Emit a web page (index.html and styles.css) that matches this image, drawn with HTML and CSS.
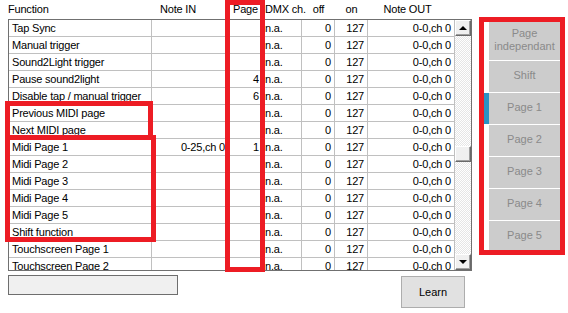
FILE: index.html
```html
<!DOCTYPE html>
<html lang="en">
<head>
  <meta charset="UTF-8" />
  <meta name="viewport" content="width=device-width, initial-scale=1.0" />
  <title>MIDI Mapping</title>
  <link rel="stylesheet" href="styles.css">
</head>
<body>
  <div class="window">
    <div class="mapping">
      <div class="grid-head">
        <span class="h-func">Function</span>
        <span class="h-notein">Note IN</span>
        <span class="h-page">Page</span>
        <span class="h-dmx">DMX ch.</span>
        <span class="h-off">off</span>
        <span class="h-on">on</span>
        <span class="h-noteout">Note OUT</span>
      </div>

      <div class="grid-box">
        <div class="grid-rows">
          <div class="row"><span class="fn">Tap Sync</span><span></span><span></span><span class="dmx">n.a.</span><span>0</span><span>127</span><span>0-0,ch 0</span></div>
          <div class="row"><span class="fn">Manual trigger</span><span></span><span></span><span class="dmx">n.a.</span><span>0</span><span>127</span><span>0-0,ch 0</span></div>
          <div class="row"><span class="fn">Sound2Light trigger</span><span></span><span></span><span class="dmx">n.a.</span><span>0</span><span>127</span><span>0-0,ch 0</span></div>
          <div class="row"><span class="fn">Pause sound2light</span><span></span><span>4</span><span class="dmx">n.a.</span><span>0</span><span>127</span><span>0-0,ch 0</span></div>
          <div class="row"><span class="fn">Disable tap / manual trigger</span><span></span><span>6</span><span class="dmx">n.a.</span><span>0</span><span>127</span><span>0-0,ch 0</span></div>
          <div class="row"><span class="fn">Previous MIDI page</span><span></span><span></span><span class="dmx">n.a.</span><span>0</span><span>127</span><span>0-0,ch 0</span></div>
          <div class="row"><span class="fn">Next MIDI page</span><span></span><span></span><span class="dmx">n.a.</span><span>0</span><span>127</span><span>0-0,ch 0</span></div>
          <div class="row"><span class="fn">Midi Page 1</span><span>0-25,ch 0</span><span>1</span><span class="dmx">n.a.</span><span>0</span><span>127</span><span>0-0,ch 0</span></div>
          <div class="row"><span class="fn">Midi Page 2</span><span></span><span></span><span class="dmx">n.a.</span><span>0</span><span>127</span><span>0-0,ch 0</span></div>
          <div class="row"><span class="fn">Midi Page 3</span><span></span><span></span><span class="dmx">n.a.</span><span>0</span><span>127</span><span>0-0,ch 0</span></div>
          <div class="row"><span class="fn">Midi Page 4</span><span></span><span></span><span class="dmx">n.a.</span><span>0</span><span>127</span><span>0-0,ch 0</span></div>
          <div class="row"><span class="fn">Midi Page 5</span><span></span><span></span><span class="dmx">n.a.</span><span>0</span><span>127</span><span>0-0,ch 0</span></div>
          <div class="row"><span class="fn">Shift function</span><span></span><span></span><span class="dmx">n.a.</span><span>0</span><span>127</span><span>0-0,ch 0</span></div>
          <div class="row"><span class="fn">Touchscreen Page 1</span><span></span><span></span><span class="dmx">n.a.</span><span>0</span><span>127</span><span>0-0,ch 0</span></div>
          <div class="row"><span class="fn">Touchscreen Page 2</span><span></span><span></span><span class="dmx">n.a.</span><span>0</span><span>127</span><span>0-0,ch 0</span></div>
        </div>
        <div class="vscroll">
          <div class="sb-btn"><i class="arrow-up"></i></div>
          <div class="sb-thumb"></div>
          <div class="sb-btn sb-down"><i class="arrow-down"></i></div>
        </div>
      </div>

      <div class="grid-foot">
        <div class="status-box"></div>
        <button type="button" class="learn-btn">Learn</button>
      </div>
    </div>

    <div class="pages">
      <div class="page-item tall"><button type="button" class="page-btn">Page<br>independant</button></div>
      <div class="page-item"><button type="button" class="page-btn">Shift</button></div>
      <div class="page-item active"><button type="button" class="page-btn">Page 1</button></div>
      <div class="page-item"><button type="button" class="page-btn">Page 2</button></div>
      <div class="page-item"><button type="button" class="page-btn">Page 3</button></div>
      <div class="page-item"><button type="button" class="page-btn">Page 4</button></div>
      <div class="page-item"><button type="button" class="page-btn">Page 5</button></div>
    </div>
  </div>

  <!-- annotation boxes drawn over the screen -->
  <div class="mark mark-page"></div>
  <div class="mark mark-nav"></div>
  <div class="mark mark-midi"></div>
  <div class="mark mark-pages"></div>
</body>
</html>
```

FILE: styles.css
```css
body {
  margin: 0;
  font-family: "Liberation Sans", Arial, sans-serif;
  font-size: 11px;
  letter-spacing: -0.2px;
  color: #000;
  background: #fff;
}

.window {
  display: flex;
  align-items: flex-start;
  padding-left: 8px;
}

.mapping {
  width: 464px;
}

/* column header */
.grid-head {
  display: grid;
  grid-template-columns: 143px 77px 34px 39px 33px 33px 87px;
  height: 19px;
  line-height: 19px;
  padding-left: 1px;
  white-space: nowrap;
}

.h-func {
  margin-left: -1px;
}

.h-notein {
  padding-left: 8px;
}

.h-page {
  padding-left: 4px;
}

.h-off,
.h-on {
  text-align: center;
}

.h-dmx {
  padding-left: 2px;
}

.h-noteout {
  text-align: center;
  padding-right: 8px;
}

/* grid */
.grid-box {
  display: flex;
  height: 252px;
  border: 1px solid #707070;
  box-sizing: border-box;
}

.grid-rows {
  flex: 1;
  overflow: hidden;
}

.row {
  display: grid;
  grid-template-columns: 143px 77px 34px 39px 33px 33px 87px;
  height: 17px;
  line-height: 16px;
  border-bottom: 1px solid #c0c0c0;
  box-sizing: border-box;
}

.row span {
  padding: 0 3px;
  border-right: 1px solid #c0c0c0;
  text-align: right;
  white-space: nowrap;
  overflow: hidden;
}

.row .fn {
  text-align: left;
}

.row .dmx {
  text-align: left;
  padding-left: 2px;
}

/* scrollbar */
.vscroll {
  width: 16px;
  display: flex;
  flex-direction: column;
  background: repeating-conic-gradient(#fff 0 25%, #e6e6e6 0 50%) 0 0 / 2px 2px;
}

.sb-btn,
.sb-thumb {
  height: 16px;
  background: #f0f0f0;
  border-top: 1px solid #fff;
  border-left: 1px solid #fff;
  border-right: 1px solid #696969;
  border-bottom: 1px solid #696969;
  box-shadow: inset -1px -1px #a0a0a0;
  box-sizing: border-box;
  display: flex;
  align-items: center;
  justify-content: center;
}

.sb-thumb {
  margin-top: 110px;
}

.sb-down {
  margin-top: auto;
}

.arrow-up,
.arrow-down {
  width: 0;
  height: 0;
  border-left: 4px solid transparent;
  border-right: 4px solid transparent;
}

.arrow-up {
  border-bottom: 4px solid #000;
}

.arrow-down {
  border-top: 4px solid #000;
}

/* under the grid */
.grid-foot {
  display: flex;
  justify-content: space-between;
  align-items: flex-start;
  margin-top: 4px;
  padding-right: 7px;
}

.status-box {
  width: 170px;
  height: 20px;
  background: #f0f0f0;
  border: 1px solid #6e6e6e;
  box-sizing: border-box;
}

.learn-btn {
  width: 64px;
  height: 32px;
  margin-top: 1px;
  background: #e1e1e1;
  border: 1px solid #adadad;
  font: inherit;
  color: #000;
  padding: 0;
}

/* page selector */
.pages {
  width: 76px;
  margin-left: 12px;
  margin-top: 22px;
  display: flex;
  flex-direction: column;
  gap: 1px;
}

.page-item {
  display: flex;
  height: 31px;
}

.page-item.tall {
  height: 38px;
}

.page-item::before {
  content: "";
  width: 5px;
  flex: none;
}

.page-item.active::before {
  background: #2a92c4;
}

.page-btn {
  flex: 1;
  border: none;
  background: #cccccc;
  color: #8a8a8a;
  font: inherit;
  line-height: 13px;
  padding: 0 0 2px;
}

/* red annotation boxes */
.mark {
  position: absolute;
  border: 5px solid #ed1c24;
  box-sizing: border-box;
}

.mark-page {
  left: 225px;
  top: 0;
  width: 40px;
  height: 272px;
}

.mark-nav {
  left: 5px;
  top: 101px;
  width: 148px;
  height: 39px;
}

.mark-midi {
  left: 5px;
  top: 135px;
  width: 151px;
  height: 107px;
}

.mark-pages {
  left: 479px;
  top: 17px;
  width: 86px;
  height: 238px;
}
```
